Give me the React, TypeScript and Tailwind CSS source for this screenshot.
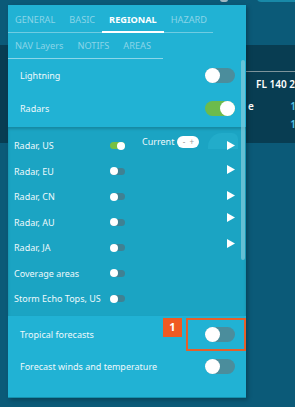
import React from "react";

const font = { fontFamily: '"Noto Sans", "Open Sans", sans-serif' };

function Toggle({ on = false }: { on?: boolean }) {
  return (
    <div
      className={`flex h-[15px] w-[30px] items-center rounded-full ${
        on ? "justify-end bg-[#6cbb4c]" : "justify-start bg-[#4b8d9c]"
      }`}
    >
      <div className="h-[15px] w-[15px] rounded-full bg-white" />
    </div>
  );
}

function MiniToggle({ on = false }: { on?: boolean }) {
  return (
    <div
      className={`flex h-[7px] w-[15px] items-center rounded-full ${
        on ? "justify-end bg-[#77c043]" : "justify-start bg-[#3f8193]"
      }`}
    >
      <div className="h-[8px] w-[8px] rounded-full bg-white" />
    </div>
  );
}

function Arrow() {
  return (
    <svg width="8" height="9" viewBox="0 0 8 9" className="shrink-0">
      <path d="M0 0 L8 4.5 L0 9 Z" fill="#ffffff" />
    </svg>
  );
}

export default function App() {
  const topTabs = [
    { label: "GENERAL" },
    { label: "BASIC" },
    { label: "REGIONAL", active: true },
    { label: "HAZARD" },
  ];
  const subTabs = ["NAV Layers", "NOTIFS", "AREAS"];
  const radars = [
    { label: "Radar, US", on: true, arrow: true },
    { label: "Radar, EU", arrow: true },
    { label: "Radar, CN", arrow: true },
    { label: "Radar, AU", arrow: true },
    { label: "Radar, JA", arrow: true },
    { label: "Coverage areas" },
    { label: "Storm Echo Tops, US" },
  ];

  return (
    <div className="relative h-[407px] w-[295px] overflow-hidden bg-[#0b5a78]" style={font}>
      {/* map behind the panel */}
      <div className="flex h-full flex-col">
        <div className="relative h-[45px]">
          <div className="absolute left-[220px] top-[-3px] h-[5px] w-[8px] rounded-full bg-[#9fb8c2]" />
          <div className="absolute left-[257px] top-[-6px] h-[8px] w-[50px] rounded-[4px] bg-[#1889a8]" />
        </div>
        <div className="flex h-[98px] flex-col bg-[#083d52] pl-[246px]">
          <div className="h-[27px] border-b border-[#7d949c]" />
          <div className="flex h-[24px] items-center whitespace-nowrap pl-[10px] text-[10px] font-semibold text-white">
            FL 140 2
          </div>
          <div className="flex h-[20px] items-center justify-between pl-[2px] text-[10px] font-semibold">
            <span className="text-white">e</span>
            <span className="-mr-[1px] text-[#58c4e6]">1</span>
          </div>
          <div className="flex h-[16px] items-center justify-end text-[10px] font-semibold text-[#58c4e6]">
            <span className="-mr-[1px]">1</span>
          </div>
        </div>
      </div>

      {/* layers panel */}
      <div className="absolute left-[8px] top-[5px] flex h-[393px] w-[238px] flex-col overflow-hidden whitespace-nowrap border-b border-[#1590ad] bg-[#21b2d4] shadow-[2px_2px_4px_rgba(0,0,0,0.25)]">
        <div className="flex h-[28px] w-[205px] border-b border-[#6fcce2]">
          {topTabs.map((t) => (
            <div
              key={t.label}
              className={`flex items-center px-[7px] pt-[3px] text-[9.2px] ${
                t.active
                  ? "-mb-[1px] border-b-2 border-white font-bold text-white"
                  : "text-[#8ad5e8]"
              }`}
            >
              {t.label}
            </div>
          ))}
        </div>
        <div className="flex h-[26px] w-[155px] border-b border-[#8bd6e9]">
          {subTabs.map((t) => (
            <div key={t} className="flex items-center px-[7px] pt-[1px] text-[9.2px] text-[#8ad5e8]">
              {t}
            </div>
          ))}
        </div>

        <div className="flex flex-col pb-[2px]">
          <div className="flex h-[33px] items-center justify-between pl-[12px] pr-[11px] text-[9px] text-[#eef9fc]">
            <span>Lightning</span>
            <Toggle />
          </div>
          <div className="flex h-[33px] items-center justify-between pl-[12px] pr-[11px] text-[9px] text-[#eef9fc]">
            <span>Radars</span>
            <Toggle on />
          </div>
        </div>

        <div className="relative flex flex-col bg-[#1ba4c3] pb-[4px] pl-[6px] pr-[11px] pt-[6px] shadow-[inset_0_2px_3px_rgba(0,0,0,0.18)]">
          <div className="absolute right-[8px] top-[6px] h-[16px] w-[30px] rounded-tl-[14px] rounded-tr-[6px] bg-[#22acca]" />
          {radars.map((r, i) => (
            <div key={r.label} className="relative flex h-[25.5px] items-center text-[9px] text-[#eef9fc]">
              <span className="w-[96px] shrink-0">{r.label}</span>
              <MiniToggle on={r.on} />
              {i === 0 && (
                <div className="-mt-[8px] ml-[17px] flex items-center gap-[3px]">
                  <span>Current</span>
                  <span className="flex h-[12px] w-[22px] items-center justify-center gap-[4px] rounded-full bg-white text-[8px] leading-none text-[#9a9a9a]">
                    <span>-</span>
                    <span>+</span>
                  </span>
                </div>
              )}
              {r.arrow && (
                <div className={`ml-auto ${i === 0 ? "" : i < 3 ? "-mt-[3px]" : "-mt-[9px]"}`}>
                  <Arrow />
                </div>
              )}
            </div>
          ))}
        </div>

        <div className="flex flex-1 flex-col pt-[3px]">
          <div className="flex h-[32px] items-center justify-between pl-[12px] pr-[11px] text-[9px] text-[#eef9fc]">
            <span>Tropical forecasts</span>
            <Toggle />
          </div>
          <div className="flex h-[32px] items-center justify-between pl-[12px] pr-[11px] text-[9px] text-[#eef9fc]">
            <span>Forecast winds and temperature</span>
            <Toggle />
          </div>
        </div>

        {/* scrollbar */}
        <div className="absolute right-[1px] top-[55px] h-[200px] w-[4px] rounded-full bg-[#84cadb]/70" />

        {/* annotation */}
        <div className="absolute left-[178px] top-[313px] h-[33px] w-[60px] border-2 border-[#e4602b]" />
        <div className="absolute left-[155px] top-[313px] flex h-[19px] w-[19px] items-center justify-center bg-[#f05a22] text-[11px] font-bold text-white">
          1
        </div>
      </div>
    </div>
  );
}
